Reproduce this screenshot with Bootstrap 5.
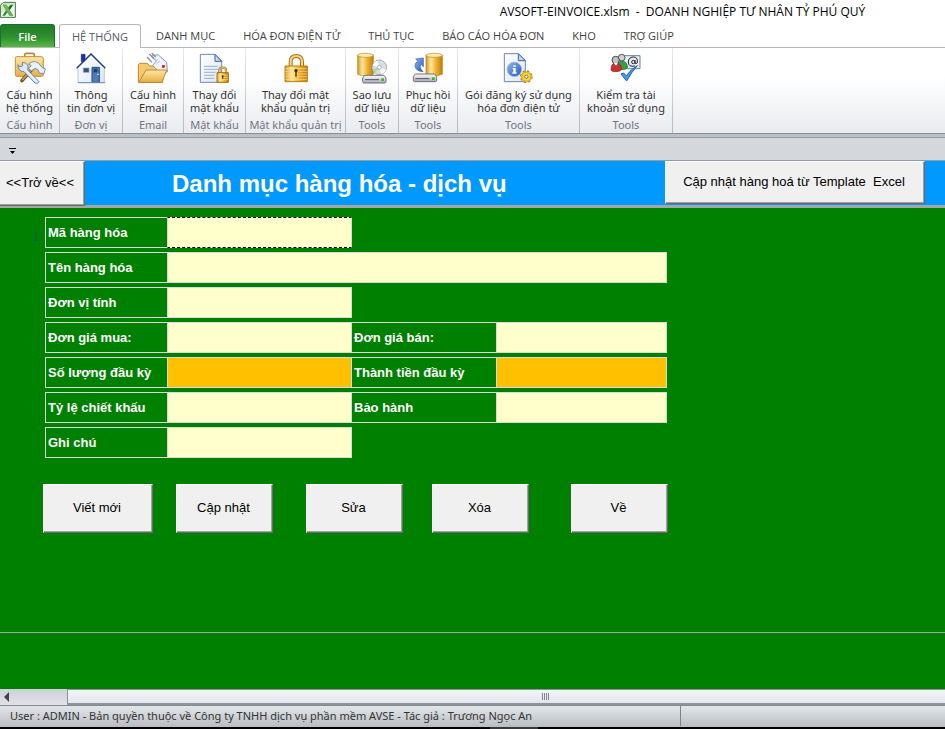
<!DOCTYPE html>
<html lang="vi">
<head>
<meta charset="utf-8">
<meta name="viewport" content="width=device-width, initial-scale=1">
<title>AVSOFT-EINVOICE.xlsm - DOANH NGHIỆP TƯ NHÂN TỶ PHÚ QUÝ</title>
<link href="https://cdn.jsdelivr.net/npm/bootstrap@5.3.0/dist/css/bootstrap.min.css" rel="stylesheet">
<style>
body{font-family:"Noto Sans","Open Sans",sans-serif;font-size:11px;line-height:13px;color:#333;background:#fff}
svg{display:block}
.title-bar{height:24px}
.title-text{font-family:"Open Sans","Noto Sans",sans-serif;font-size:12px;line-height:24px;color:#000;white-space:pre;padding-left:404px}
.tab-strip{height:24px;border-bottom:1px solid #b6b9bd;font-family:"Open Sans","Noto Sans",sans-serif}
.tab-strip .nav-link{height:23px;padding:0 14px;line-height:23px;color:#444;white-space:nowrap;border:0;border-radius:0}
.tab-strip .file-tab{width:55px;padding:0;text-align:center;color:#fff;font-weight:600;background:linear-gradient(#1d7c26,#2f8f30 55%,#58b83f);border:1px solid #18702a;border-bottom:0;border-radius:3px 3px 0 0;margin-right:4px}
.tab-strip .nav-link.active{height:24px;padding:0 12px;color:#555b66;background:#fff;border:1px solid #b6b9bd;border-bottom:0;border-radius:3px 3px 0 0;margin-right:1px}
.ribbon{display:grid;grid-template-columns:60px 63px 61px 62px 100px 53px 59px 122px 93px 1fr;height:85px;background:linear-gradient(#fff 35%,#e9ebef)}
.ribbon-group{border-right:1px solid;border-image:linear-gradient(#e8eaec,#b4b8be) 1;white-space:nowrap;text-align:center}
.ribbon-group button{display:block;height:69px;padding:4px 0 0;border:0;background:none;color:#333;line-height:13px;width:100%}
.ribbon-group button svg{margin:0 auto 4px}
.ribbon-group .face{display:flex;flex-direction:column;height:65px}
.group-name{color:#70757f;line-height:16px}
.ribbon-edge{height:5px;background:linear-gradient(#8b9097 1px,#b9bdc2 1px,#c1c5ca 4px,#8f9cab 4px)}
.quick-bar{height:23px;background:#d4d8dd;border-bottom:1px solid #8f9cab;padding:9px 0 0 8px}
.quick-bar button{display:block;border:0;background:none;padding:0}
.sheet-head{height:47px;background:#0099ff;border-bottom:3px solid #a6a6a6;font-family:"Liberation Sans",Arial,sans-serif}
.sheet-head h1{font-size:24px;line-height:46px;font-weight:700;color:#fff;padding-left:87px}
.win-btn{font-family:"Liberation Sans",Arial,sans-serif;font-size:13px;line-height:16px;color:#000;background:#f0f0f0;border:1px solid;border-color:#fff #696969 #696969 #fff;box-shadow:inset -1px -1px #a0a0a0;border-radius:0;padding:0 2px 2px 0;white-space:nowrap}
.back-btn{width:85px;height:45px;border-left:0;padding-right:4px}
.import-btn{width:260px;height:43px;margin-right:20px;white-space:pre}
.sheet{background:#008000;font-family:"Liberation Sans",Arial,sans-serif;padding-top:9px}
.row-mark{width:45px;padding:14px 6px 0 0;text-align:right;color:#006450;font-size:12px}
.item-form{max-width:622px}
.form-line{display:grid;grid-template-columns:122fr 185fr 144fr 171fr;height:31px}
.form-line label{border:1px solid #d9d9d9;border-right:0;color:#fff;font-size:13px;font-weight:700;line-height:29px;padding-left:2px;white-space:nowrap}
.form-line input+label{border-left:0}
.form-line input{border:1px solid #d9d9d9;border-radius:0;background:#ffffcc;min-width:0;padding:0 4px;font-size:13px}
.form-line input:focus{outline:0}
.form-line input.total{background:#ffc000}
.form-line input.current{border-top:1px dashed #000;border-bottom:1px dashed #000}
.form-line .wide{grid-column:span 3}
.actions{display:grid;grid-template-columns:133px 130px 126px 139px 97px;padding:26px 0 0 43px}
.actions .win-btn{width:97px;height:49px}
.actions .win-btn:first-child{width:110px}
.freeze-line{border-top:1px solid #a6a6a6;height:57px}
.scroll-row{height:17px;background:#dcdfe5;border-bottom:1px solid #868b93}
.scroll-row button{width:67px;border:0;padding:0 0 0 4px;background:linear-gradient(#cdd1d7,#e0e3e8)}
.scroll-thumb{background:linear-gradient(#f3f5f8,#e3e6eb);border:1px solid #8e939b;border-right:0;border-bottom:2px solid #8e939b;padding-left:78px}
.status-bar{height:21px;background:linear-gradient(#e3e6e9,#b9bdc2);color:#333;line-height:20px;padding-left:10px}
.status-text{width:671px;border-right:1px solid #7d8289}
.task-edge{height:2px;background:linear-gradient(90deg,#000 490px,#383838 490px,#383838 538px,#000 538px)}
</style>
<script src="https://cdn.jsdelivr.net/npm/bootstrap@5.3.0/dist/js/bootstrap.bundle.min.js"></script>
</head>
<body>
<svg width="0" height="0" class="position-absolute" aria-hidden="true">
<defs>
<linearGradient id="gold"><stop offset="0" stop-color="#d79a1c"/><stop offset=".3" stop-color="#ffe9a0"/><stop offset=".6" stop-color="#eeb530"/><stop offset="1" stop-color="#c17e06"/></linearGradient>
<linearGradient id="amber" x2="0" y2="1"><stop offset="0" stop-color="#ffe7a4"/><stop offset="1" stop-color="#e9ae45"/></linearGradient>
<linearGradient id="paper" x2="1" y2="1"><stop offset="0" stop-color="#fff"/><stop offset="1" stop-color="#dbe6f5"/></linearGradient>
<linearGradient id="azure" x2="1" y2="1"><stop offset="0" stop-color="#8fb8f2"/><stop offset="1" stop-color="#2858b8"/></linearGradient>
<linearGradient id="steel" x2="0" y2="1"><stop offset="0" stop-color="#fff"/><stop offset="1" stop-color="#a5a9b3"/></linearGradient>
</defs>
</svg>
<div class="d-flex flex-column min-vh-100">
<header>
  <div class="title-bar d-flex">
    <svg width="16" height="24" viewBox="0 0 48 72" aria-hidden="true"><path d="M10 7h36v45H1V16z" fill="#f4faf1" stroke="#34713d" stroke-width="3"/><path d="M3 17l9-8h32v10l-20 4L3 40z" fill="#d3e8cc"/><path d="M8 14h11l6 10 7-10h8L29 30l11 17H28l-6-10-7 10H7l11-17z" fill="#2b8c39"/><path d="M8 14h11l20 33H28z" fill="#72b554"/><path d="M29 17h8l-8 12-4-6z" fill="#176b2b"/></svg>
    <div class="title-text flex-grow-1 text-center">AVSOFT-EINVOICE.xlsm  -  DOANH NGHIỆP TƯ NHÂN TỶ PHÚ QUÝ</div>
  </div>
  <nav class="tab-strip nav flex-nowrap">
    <a class="nav-link file-tab" href="#">File</a>
    <a class="nav-link active" href="#" aria-current="page">HỆ THỐNG</a>
    <a class="nav-link" href="#">DANH MỤC</a>
    <a class="nav-link" href="#">HÓA ĐƠN ĐIỆN TỬ</a>
    <a class="nav-link" href="#">THỦ TỤC</a>
    <a class="nav-link" href="#">BÁO CÁO HÓA ĐƠN</a>
    <a class="nav-link" href="#">KHO</a>
    <a class="nav-link" href="#">TRỢ GIÚP</a>
  </nav>
  <div class="ribbon">
    <div class="ribbon-group"><button type="button"><span class="face">
      <svg width="32" height="32" viewBox="36 156 96 96"><path d="M68 172v-7q0-5 5-5h19q5 0 5 5v7" fill="none" stroke="#b98733" stroke-width="5"/><path d="M44 170h74q6 0 6 6v48q0 5-5 5H45q-5 0-5-5v-48q0-6 4-6z" fill="url(#amber)" stroke="#c48e35" stroke-width="3"/><path d="M92 205L60 242" stroke="#6f5525" stroke-width="11" stroke-linecap="round"/><path d="M91 205L61 240" stroke="#c8a253" stroke-width="5"/><path d="M80 192q14-13 29-3l12 14 9 3-4 15-14-2-4-10-9-4-11 8-8-8 8-8z" fill="#e9f1fb" stroke="#7990b2" stroke-width="3"/><path d="M62 187l-1 11-10 3-3-7q-1 21 18 21l33 34q8 5 12-4l-34-35q6-20-15-23z" fill="#dce9fa" stroke="#6784b1" stroke-width="3"/><path d="M70 208l33 34" stroke="#fff" stroke-width="3"/></svg>
      <span>Cấu hình<br>hệ thống</span></span></button><div class="group-name">Cấu hình</div></div>
    <div class="ribbon-group"><button type="button"><span class="face">
      <svg width="32" height="32" viewBox="225 156 96 96"><path d="M244 163h11v22h-11z" fill="#1932a8" stroke="#102080" stroke-width="2"/><path d="M234 203l39-38 40 38v45h-79z" fill="url(#paper)" stroke="#9eb0c9" stroke-width="2"/><path d="M230 205l43-43 43 43" fill="none" stroke="#243a8c" stroke-width="4"/><path d="M233 208l40-40 40 40" fill="none" stroke="#fff" stroke-width="2"/><path d="M250 204h17v13h-17z" fill="#334d7c" stroke="#90a5c4" stroke-width="2"/><path d="M276 202h22v45h-22z" fill="#4d7cb9" stroke="#244a80" stroke-width="3"/><path d="M281 206h11v11h-11z" fill="#1d3f78"/><path d="M292 221h4v4h-4z" fill="#fff"/><path d="M234 248h82" stroke="#718bb5" stroke-width="3"/></svg>
      <span>Thông<br>tin đơn vị</span></span></button><div class="group-name">Đơn vị</div></div>
    <div class="ribbon-group"><button type="button"><span class="face">
      <svg width="32" height="32" viewBox="414 156 96 96"><path d="M418 247v-53l4-4h23l7 8h39v49z" fill="#f5ca69" stroke="#bf8930" stroke-width="3"/><path d="M458 168l14 15-11 13 20 21 24-1-2-29-26-23z" fill="#edf2fb" stroke="#8797b3" stroke-width="3"/><path d="M451 162l14 15M458 159l12 12M444 171l15 16" stroke="#8590a8" stroke-width="4"/><path d="M469 184l8-7m-4 14l10-9" stroke="#a1adc2" stroke-width="2"/><path d="M493 195v9m-4-5h9" stroke="#d22c2c" stroke-width="6"/><path d="M419 247l22-37h62l-14 37z" fill="url(#amber)" stroke="#bf8930" stroke-width="3"/></svg>
      <span>Cấu hình<br>Email</span></span></button><div class="group-name">Email</div></div>
    <div class="ribbon-group"><button type="button"><span class="face">
      <svg width="32" height="32" viewBox="597 156 96 96"><path d="M601 163h44l20 20v64h-64z" fill="url(#paper)" stroke="#7087b1" stroke-width="3"/><path d="M645 163v21h20z" fill="#c4d7ef" stroke="#40639d" stroke-width="3"/><path d="M612 199h42m-42 9h42m-42 9h35m-35 9h31m-31 9h31" stroke="#9dafd0" stroke-width="3"/><path d="M658 219v-9q1-7 10-7t10 7v9" fill="none" stroke="#a67922" stroke-width="7"/><path d="M658 219v-9q1-7 10-7t10 7v9" fill="none" stroke="#f4d377" stroke-width="3"/><path d="M651 218h34v29h-34z" fill="url(#gold)" stroke="#a37014" stroke-width="3"/><path d="M653 225h31m-31 7h31m-31 7h31" stroke="#fbdb8c" stroke-width="2"/><path d="M668 226v10m-3-7h6" stroke="#5b3b0b" stroke-width="4"/></svg>
      <span>Thay đổi<br>mật khẩu</span></span></button><div class="group-name">Mật khẩu</div></div>
    <div class="ribbon-group"><button type="button"><span class="face">
      <svg width="32" height="32" viewBox="118 156 96 96"><path d="M150 201v-16q0-17 17-17t17 17v16" fill="none" stroke="#a9731a" stroke-width="12"/><path d="M150 201v-16q0-17 17-17t17 17v16" fill="none" stroke="#f7d57d" stroke-width="6"/><path d="M133 198h67v47h-67z" fill="url(#gold)" stroke="#bd7b0f" stroke-width="3"/><path d="M134 206h65m-65 8h65m-65 8h65m-65 8h65m-65 8h65" stroke="#fbe2a0" stroke-width="2"/><circle cx="166" cy="212" r="5" fill="#4c2a00"/><path d="M166 212v18" stroke="#4c2a00" stroke-width="4"/></svg>
      <span>Thay đổi mật<br>khẩu quản trị</span></span></button><div class="group-name">Mật khẩu quản trị</div></div>
    <div class="ribbon-group"><button type="button"><span class="face">
      <svg width="32" height="32" viewBox="348 156 96 96"><path d="M353 165v58q22 10 47 0v-58z" fill="url(#gold)" stroke="#ad7a1c" stroke-width="2"/><ellipse cx="376.500" cy="166" rx="23.500" ry="6" fill="#ffedac" stroke="#b9892d" stroke-width="2"/><circle cx="418" cy="202" r="22" fill="#dadde5" stroke="#8d929d" stroke-width="2"/><path d="M418 202l-20-6q4-12 14-14z" fill="#fff"/><path d="M418 202l20 7q-5 11-15 13z" fill="#f7f9fc"/><path d="M418 202l-20 6 7 10z" fill="#99dca8"/><circle cx="418" cy="202" r="6" fill="#fff" stroke="#8c91a0" stroke-width="2"/><path d="M374 226h58l6 8v11q0 4-4 4h-62q-4 0-4-4v-11z" fill="url(#steel)" stroke="#6b707c" stroke-width="3"/><path d="M375 239h42" stroke="#50545d" stroke-width="3"/><path d="M424 235h8v8h-8z" fill="#35b52c"/></svg>
      <span>Sao lưu<br>dữ liệu</span></span></button><div class="group-name">Tools</div></div>
    <div class="ribbon-group"><button type="button"><span class="face">
      <svg width="32" height="32" viewBox="517 156 96 96"><path d="M559 165v58q22 10 49 0v-58z" fill="url(#gold)" stroke="#ad7a1c" stroke-width="2"/><ellipse cx="583.500" cy="166" rx="24.500" ry="6" fill="#ffedac" stroke="#b9892d" stroke-width="2"/><path d="M528 177l23-3v26l-7-7q-7 9 6 22-23-2-24-18 0-9 9-13z" fill="url(#azure)" stroke="#355fb5" stroke-width="2"/><path d="M527 222h58l6 8v11q0 4-4 4h-62q-4 0-4-4v-11z" fill="url(#steel)" stroke="#6b707c" stroke-width="3"/><path d="M527 236h42" stroke="#50545d" stroke-width="3"/><path d="M577 232h8v8h-8z" fill="#35b52c"/></svg>
      <span>Phục hồi<br>dữ liệu</span></span></button><div class="group-name">Tools</div></div>
    <div class="ribbon-group"><button type="button"><span class="face">
      <svg width="32" height="32" viewBox="157 156 96 96"><path d="M161 161h42l21 21v63h-63z" fill="url(#paper)" stroke="#7087b1" stroke-width="3"/><path d="M203 161v21h21z" fill="#c4d7ef" stroke="#40639d" stroke-width="3"/><circle cx="191" cy="208" r="22" fill="url(#azure)" stroke="#a7c0e6" stroke-width="2"/><path d="M188 196h7v5h-7zm-2 8h9v13h3v4h-13v-4h3v-9h-2z" fill="#fff"/><circle cx="227" cy="230" r="15" fill="#f5cc47" stroke="#a47b18" stroke-width="8" stroke-dasharray="6 5.780"/><circle cx="227" cy="230" r="14" fill="#f8d44d" stroke="#e0b02a" stroke-width="5"/><circle cx="227" cy="230" r="5" fill="#fff" stroke="#93701c" stroke-width="3"/></svg>
      <span>Gói đăng ký sử dụng<br>hóa đơn điện tử</span></span></button><div class="group-name">Tools</div></div>
    <div class="ribbon-group"><button type="button"><span class="face">
      <svg width="32" height="32" viewBox="482 156 96 96"><path d="M520 167h52v39h-52z" fill="#e7eef7" stroke="#6d839f" stroke-width="3"/><circle cx="552" cy="186" r="5" fill="none" stroke="#222" stroke-width="3"/><path d="M557 180v9q2 5 7-1 2-17-12-17-15 1-15 15 0 16 20 12" fill="none" stroke="#222" stroke-width="3"/><path d="M504 205q0-22 14-22t17 18q-2 8-20 8z" fill="#359d42" stroke="#1f6c2a" stroke-width="2"/><circle cx="517" cy="173" r="10" fill="#d1d1d1" stroke="#555" stroke-width="3"/><path d="M485 210q0-22 15-22t17 20q-3 7-18 7-12 0-14-5z" fill="#c53435" stroke="#872021" stroke-width="2"/><circle cx="499" cy="180" r="11" fill="#c3c3c3" stroke="#444" stroke-width="3"/><path d="M493 188l7 9 6-9" fill="#fff"/><path d="M515 222l8-3 8 9q13-21 33-31-18 20-32 46z" fill="#489bee" stroke="#245dbb" stroke-width="3"/></svg>
      <span>Kiểm tra tài<br>khoản sử dụng</span></span></button><div class="group-name">Tools</div></div>
  </div>
  <div class="ribbon-edge"></div>
  <div class="quick-bar"><button type="button" aria-label="Tùy chỉnh thanh công cụ"><svg width="9" height="8" viewBox="0 0 9 8"><path d="M1 1h7v1H1zM2 4h5L4.500 7z" fill="#000"/></svg></button></div>
</header>
<div class="sheet-head d-flex flex-shrink-0">
  <button type="button" class="win-btn back-btn">&lt;&lt;Trở về&lt;&lt;</button>
  <h1 class="flex-grow-1 mb-0 text-nowrap">Danh mục hàng hóa - dịch vụ</h1>
  <button type="button" class="win-btn import-btn">Cập nhật hàng hoá từ Template  Excel</button>
</div>
<main class="sheet flex-grow-1 d-flex flex-column">
  <div class="d-flex">
    <div class="row-mark flex-shrink-0">1</div>
    <form class="item-form flex-grow-1 d-flex flex-column gap-1">
      <div class="form-line"><label for="code">Mã hàng hóa</label><input id="code" class="current" type="text"></div>
      <div class="form-line"><label for="name">Tên hàng hóa</label><input id="name" class="wide" type="text"></div>
      <div class="form-line"><label for="unit">Đơn vị tính</label><input id="unit" type="text"></div>
      <div class="form-line"><label for="buy">Đơn giá mua:</label><input id="buy" type="text"><label for="sell">Đơn giá bán:</label><input id="sell" type="text"></div>
      <div class="form-line"><label for="qty">Số lượng đầu kỳ</label><input id="qty" class="total" type="text"><label for="amount">Thành tiền đầu kỳ</label><input id="amount" class="total" type="text"></div>
      <div class="form-line"><label for="discount">Tỷ lệ chiết khấu</label><input id="discount" type="text"><label for="warranty">Bảo hành</label><input id="warranty" type="text"></div>
      <div class="form-line"><label for="note">Ghi chú</label><input id="note" type="text"></div>
    </form>
  </div>
  <div class="actions">
    <button type="button" class="win-btn">Viết mới</button>
    <button type="button" class="win-btn">Cập nhật</button>
    <button type="button" class="win-btn">Sửa</button>
    <button type="button" class="win-btn">Xóa</button>
    <button type="button" class="win-btn">Về</button>
  </div>
  <div class="freeze-line mt-auto"></div>
</main>
<footer>
  <div class="scroll-row d-flex">
    <button type="button" aria-label="Cuộn trái"><svg width="6" height="10" viewBox="0 0 6 10"><path d="M5 0v10L0 5z" fill="#444"/></svg></button>
    <div class="scroll-thumb flex-grow-1 d-flex align-items-center justify-content-center"><svg width="8" height="7" viewBox="0 0 8 7"><path d="M0 0h1v7H0zM2 0h1v7H2zM4 0h1v7H4zM6 0h1v7H6z" fill="#85898f"/></svg></div>
  </div>
  <div class="status-bar"><div class="status-text">User : ADMIN - Bản quyền thuộc về Công ty TNHH dịch vụ phần mềm AVSE - Tác giả : Trương Ngọc An</div></div>
  <div class="task-edge"></div>
</footer>
</div>
</body>
</html>
